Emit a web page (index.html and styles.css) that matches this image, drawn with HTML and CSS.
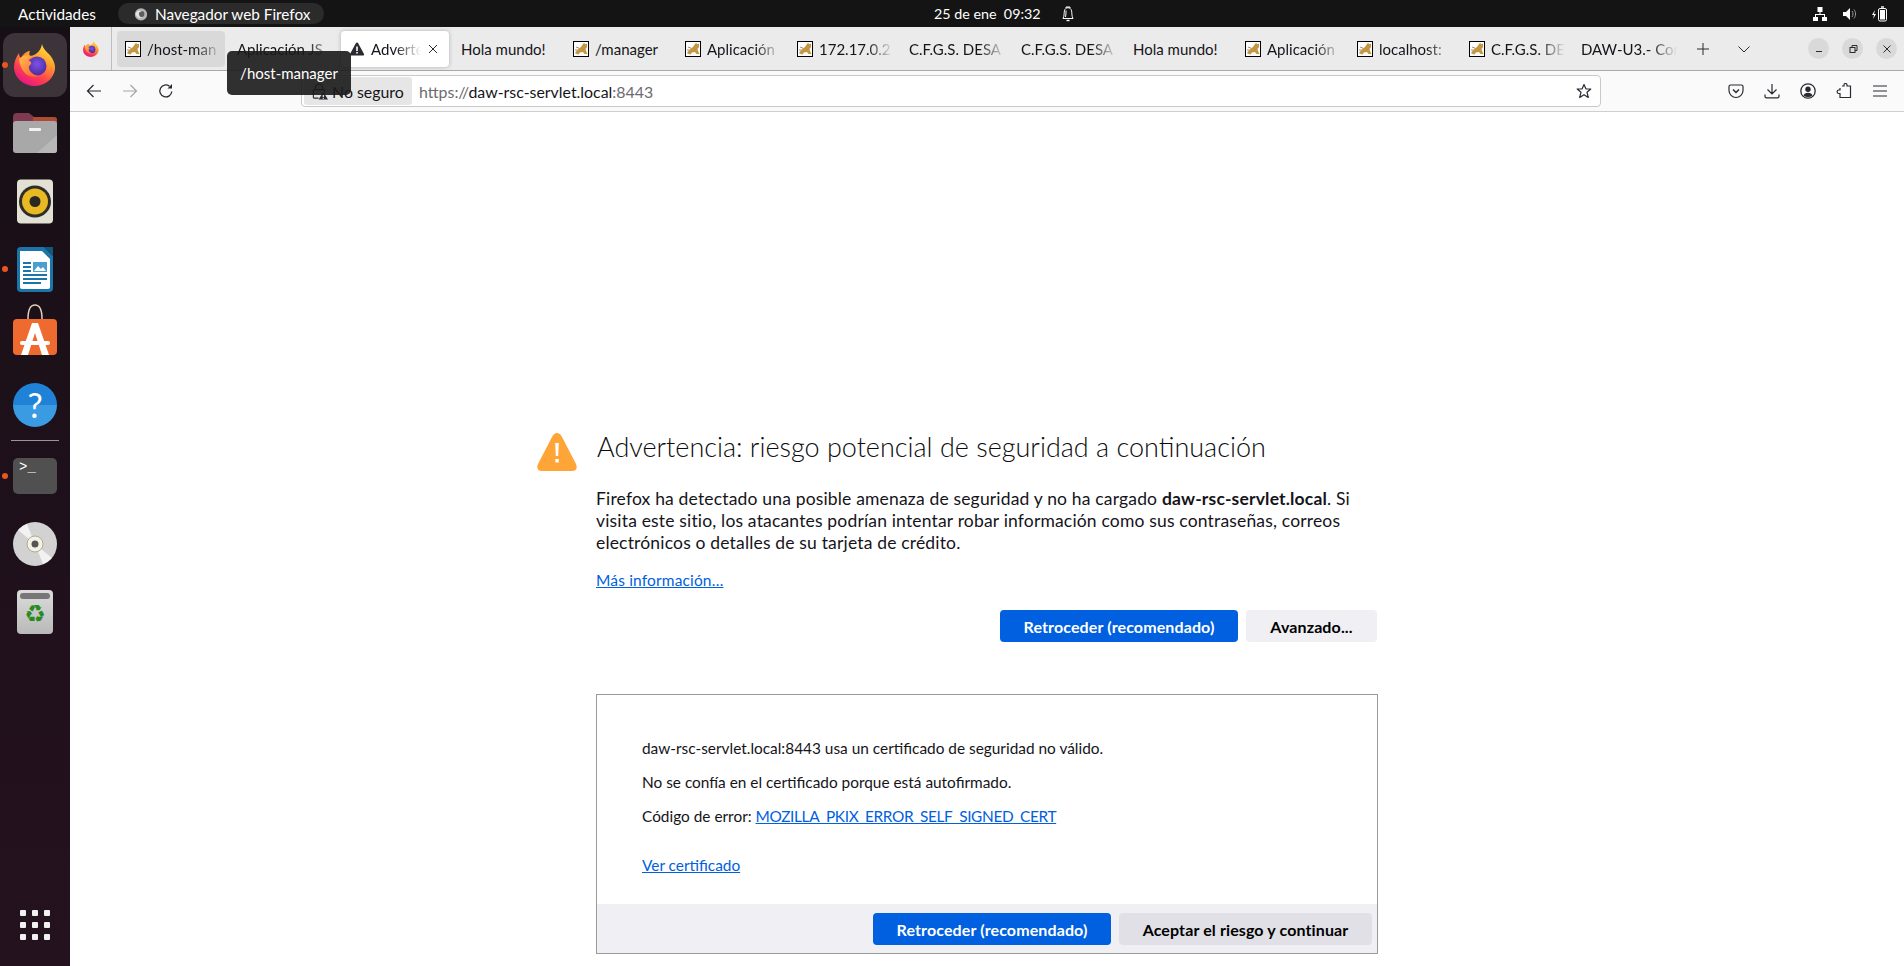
FILE: index.html
```html
<!DOCTYPE html>
<html lang="es">
<head>
    <meta charset="UTF-8">
    <title>Advertencia: riesgo potencial de seguridad a continuación</title>
    <link rel="stylesheet" href="styles.css">
</head>

<body>
    <!-- iconos que se repiten -->
    <svg class="defs" aria-hidden="true">
        <defs>
            <linearGradient id="fxOuter" x1="0.85" y1="0" x2="0.3" y2="1">
                <stop offset="0" stop-color="#ffe847"/>
                <stop offset="0.35" stop-color="#ffa52b"/>
                <stop offset="0.72" stop-color="#ff3d50"/>
                <stop offset="1" stop-color="#e31587"/>
            </linearGradient>
            <linearGradient id="fxHead" x1="0" y1="0" x2="1" y2="1">
                <stop offset="0" stop-color="#ffc04f"/>
                <stop offset="1" stop-color="#ff5a2c"/>
            </linearGradient>
            <radialGradient id="fxCore" cx="0.5" cy="0.4" r="0.6">
                <stop offset="0" stop-color="#7d52e8"/>
                <stop offset="1" stop-color="#4b2c9e"/>
            </radialGradient>
            <symbol id="firefox" viewBox="0 0 42 42">
                <path d="M28 0C29 6 35 9 38 14C41 19 42 24 40 29C37 37 29 42 21 42C10 42 0 34 0 23C0 18 2 13 5 9C5 12 6 13 7 14C9 10 13 7 16 7C15 9 15 11 16 12C20 12 27 8 28 0Z" fill="url(#fxOuter)"/>
                <circle cx="23" cy="22" r="9.5" fill="url(#fxCore)"/>
                <path d="M5 15C9 11 14 10 20 13C16 13 14 15 14 17C17 17 19 19 15 22C14 27 19 31 25 32C16 35 7 30 5 15Z" fill="url(#fxHead)"/>
            </symbol>
            <symbol id="tomcat" viewBox="0 0 16 16">
                <rect x="0.5" y="0.5" width="15" height="15" fill="#fff" stroke="#000"/>
                <path d="M2 12L5 8L8 6L10 3L11 2L12.5 3.2L14 2.5L14 6L12.5 8L13 10L14.5 13L11.5 13L10 11L7 11.5L5.5 13.5L3.5 13Z" fill="#c4963f"/>
                <path d="M3 6L6 7M2 9L4 9" stroke="#8a7a5a" stroke-width="0.8" fill="none"/>
            </symbol>
        </defs>
    </svg>

    <header class="topbar">
        <span class="activities">Actividades</span>
        <div class="app-pill">
            <svg class="app-pill-icon" viewBox="0 0 16 16">
                <circle cx="8" cy="8.5" r="7" fill="#b5b5b5"/>
                <circle cx="8.5" cy="8" r="3.4" fill="#5c5c5c"/>
                <path d="M2 7C4 4 7 4 9 5C6 5 5 7 6 9C6 11 8 12 10 12C6 14 2 11 2 7Z" fill="#e3e3e3"/>
            </svg>
            <span>Navegador web Firefox</span>
        </div>
        <div class="clock">
            <span>25 de ene&nbsp; 09:32</span>
            <svg class="bell" viewBox="0 0 14 16" fill="none" stroke="#fff">
                <path d="M2 12.5C3.4 10 3 7 3.4 4.8C3.8 2.8 5.4 1.7 7 1.7C8.6 1.7 10.2 2.8 10.6 4.8C11 7 10.6 10 12 12.5Z"/>
                <path d="M5 2V1H9V2M5 4.5C5 7 5 9 4.5 11"/>
                <path d="M5.5 14.5H8.5" stroke-width="1.4"/>
            </svg>
        </div>
        <div class="status">
            <svg viewBox="0 0 16 16" fill="#fff">
                <rect x="5.5" y="1" width="5" height="5"/>
                <rect x="1" y="11" width="5" height="4"/>
                <rect x="10" y="11" width="5" height="4"/>
                <path d="M7.5 6H8.5V8H13V11H12V9H4V11H3V8H7.5Z"/>
            </svg>
            <svg viewBox="0 0 16 16" fill="#fff">
                <path d="M2 6H5L9 2V14L5 10H2Z"/>
                <path d="M11 5C12.3 6.5 12.3 9.5 11 11M13 3.5C15 6 15 10 13 12.5" fill="none" stroke="#999"/>
            </svg>
            <svg viewBox="0 0 18 16" fill="none" stroke="#fff" class="status-bat">
                <rect x="8.5" y="2.5" width="8" height="12.5" rx="1.5"/>
                <rect x="10" y="4" width="5" height="9.5" fill="#fff" stroke="none"/>
                <path d="M11 1H14" stroke-width="1.4"/>
                <path d="M5 4L2 9H4L3 13L6 8H4Z" fill="#fff" stroke="none"/>
            </svg>
        </div>
    </header>

    <div class="desktop">
        <nav class="dock">
            <div class="dock-item dock-item-active running">
                <svg class="dock-firefox"><use href="#firefox"/></svg>
            </div>
            <div class="dock-item">
                <svg class="dock-icon-wide" viewBox="0 0 44 40">
                    <path d="M0 4Q0 0 4 0H16L21 4H41Q44 4 44 7V20H0Z" fill="#7e3a4e"/>
                    <path d="M20 4H41Q44 4 44 7V14H20Z" fill="#b9502f" opacity="0.8"/>
                    <rect y="8" width="44" height="32" rx="3" fill="#a8a8a8"/>
                    <path d="M44 22V37Q44 40 41 40H24Z" fill="#b8b8b8"/>
                    <rect x="16" y="15" width="12" height="3" rx="1" fill="#f2f2f2"/>
                </svg>
            </div>
            <div class="dock-item">
                <svg class="dock-icon-narrow" viewBox="0 0 36 44">
                    <rect width="36" height="44" rx="4" fill="#e3e0d4"/>
                    <circle cx="18" cy="22" r="16" fill="#2f2d2a"/>
                    <circle cx="18" cy="22" r="13" fill="#e8b923"/>
                    <circle cx="18" cy="22" r="5.5" fill="#2a2823"/>
                </svg>
            </div>
            <div class="dock-item running">
                <svg class="dock-icon-narrow" viewBox="0 0 36 45">
                    <path d="M4 0H27L36 9V41Q36 45 32 45H4Q0 45 0 41V4Q0 0 4 0Z" fill="#1b75a8"/>
                    <path d="M27 0H36V9Z" fill="#12577e"/>
                    <path d="M3 4H25L33 12V40Q33 42 31 42H5Q3 42 3 40Z" fill="#fff"/>
                    <rect x="16" y="15" width="14" height="10" fill="#4a9fd1"/>
                    <path d="M17 24L21 19L24 22L26 20L29 24Z" fill="#fff"/>
                    <path d="M6 16H14M6 20H14M6 24H14M6 28H30M6 32H30M6 36H24" stroke="#1b75a8" stroke-width="2"/>
                </svg>
            </div>
            <div class="dock-item">
                <svg class="dock-icon-bag" viewBox="0 0 44 51">
                    <path d="M15 15Q15 1 22 1Q29 1 29 15" fill="none" stroke="#e2cdb8" stroke-width="1.5"/>
                    <rect y="15" width="44" height="36" rx="4" fill="#ee6a2f"/>
                    <path d="M19 19H25L36 51H29L22 29L15 51H8Z" fill="#fff"/>
                    <rect x="7" y="37" width="30" height="4" rx="2" fill="#fff"/>
                </svg>
            </div>
            <div class="dock-item">
                <div class="help-icon">?</div>
            </div>
            <div class="dock-sep"></div>
            <div class="dock-item running">
                <div class="term-icon">&gt;_</div>
            </div>
            <div class="dock-item">
                <svg class="dock-icon-wide" viewBox="0 0 44 44">
                    <circle cx="22" cy="22" r="22" fill="#d2d2d2"/>
                    <path d="M22 22L5 8A22 22 0 0 1 14 2ZM22 22L39 36A22 22 0 0 1 30 42Z" fill="#f2f2f2"/>
                    <circle cx="22" cy="22" r="8" fill="#f4f1e6" stroke="#b3a98e"/>
                    <circle cx="22" cy="22" r="3.5" fill="#555"/>
                </svg>
            </div>
            <div class="dock-item">
                <div class="trash-icon">
                    <div class="trash-lid"></div>
                    <div class="trash-mark">♻</div>
                </div>
            </div>
            <div class="apps-grid">
                <i></i><i></i><i></i><i></i><i></i><i></i><i></i><i></i><i></i>
            </div>
        </nav>

        <div class="browser">
            <div class="tabstrip">
                <div class="fx-view"><svg class="fav"><use href="#firefox"/></svg></div>
                <div class="tabs">
                    <div class="tab tab-hover"><svg class="fav"><use href="#tomcat"/></svg><span class="tab-label tab-fade">/host-man</span></div>
                    <div class="tab"><span class="tab-label tab-fade">Aplicación JS</span></div>
                    <div class="tab tab-active">
                        <svg class="fav" viewBox="0 0 16 16"><path d="M8 1.5Q8.8 1.5 9.3 2.4L15 13Q15.6 14.5 14 14.5H2Q0.4 14.5 1 13L6.7 2.4Q7.2 1.5 8 1.5Z" fill="#2b2a33"/><path d="M7.2 5.5H8.8V10H7.2ZM7.2 11H8.8V12.6H7.2Z" fill="#fff"/></svg>
                        <span class="tab-label tab-fade">Adverte</span>
                        <svg class="tab-close" viewBox="0 0 12 12" fill="none" stroke="#2b2a33"><path d="M2 2L10 10M10 2L2 10"/></svg>
                    </div>
                    <div class="tab"><span class="tab-label">Hola mundo!</span></div>
                    <div class="tab"><svg class="fav"><use href="#tomcat"/></svg><span class="tab-label">/manager</span></div>
                    <div class="tab"><svg class="fav"><use href="#tomcat"/></svg><span class="tab-label tab-fade">Aplicación</span></div>
                    <div class="tab"><svg class="fav"><use href="#tomcat"/></svg><span class="tab-label tab-fade">172.17.0.2</span></div>
                    <div class="tab"><span class="tab-label tab-fade">C.F.G.S. DESA</span></div>
                    <div class="tab"><span class="tab-label tab-fade">C.F.G.S. DESA</span></div>
                    <div class="tab"><span class="tab-label">Hola mundo!</span></div>
                    <div class="tab"><svg class="fav"><use href="#tomcat"/></svg><span class="tab-label tab-fade">Aplicación</span></div>
                    <div class="tab"><svg class="fav"><use href="#tomcat"/></svg><span class="tab-label tab-fade">localhost:</span></div>
                    <div class="tab"><svg class="fav"><use href="#tomcat"/></svg><span class="tab-label tab-fade">C.F.G.S. DE</span></div>
                    <div class="tab"><span class="tab-label tab-fade">DAW-U3.- Con</span></div>
                </div>
                <div class="newtab"><svg viewBox="0 0 16 16" fill="none" stroke="#2b2a33"><path d="M8 2V14M2 8H14"/></svg></div>
                <div class="tablist"><svg viewBox="0 0 16 16" fill="none" stroke="#2b2a33"><path d="M2.5 5.5L8 11L13.5 5.5"/></svg></div>
                <div class="winctrls">
                    <div class="winbtn"><svg viewBox="0 0 12 12" fill="none" stroke="#2b2a33"><path d="M3 8.5H9"/></svg></div>
                    <div class="winbtn"><svg viewBox="0 0 12 12" fill="none" stroke="#2b2a33"><rect x="3" y="4.5" width="5" height="5"/><path d="M5 4.5V2.5H10V7.5H8"/></svg></div>
                    <div class="winbtn"><svg viewBox="0 0 12 12" fill="none" stroke="#2b2a33"><path d="M2.5 2.5L9.5 9.5M9.5 2.5L2.5 9.5"/></svg></div>
                </div>
            </div>

            <div class="navbar">
                <div class="nav-group">
                    <button class="navbtn"><svg viewBox="0 0 16 16" fill="none" stroke="#2b2a33" stroke-width="1.2"><path d="M15 8H1.5M7.5 2L1.5 8L7.5 14"/></svg></button>
                    <button class="navbtn navbtn-off"><svg viewBox="0 0 16 16" fill="none" stroke="#2b2a33" stroke-width="1.2"><path d="M1 8H14.5M8.5 2L14.5 8L8.5 14"/></svg></button>
                    <button class="navbtn"><svg viewBox="0 0 16 16" fill="none" stroke="#2b2a33" stroke-width="1.3"><path d="M13.8 8.5A6 6 0 1 1 11.5 3.2"/><path d="M14 1V5.5H9.5" fill="#2b2a33" stroke="none"/></svg></button>
                </div>
                <div class="urlbar">
                    <div class="identity">
                        <svg class="lock" viewBox="0 0 18 18" fill="none" stroke="#2b2a33" stroke-width="1.2">
                            <path d="M4.5 7V5A4 4 0 0 1 12.5 5V7"/>
                            <path d="M8 16H3.5Q2.5 16 2.5 15V8Q2.5 7 3.5 7H13.5Q14.5 7 14.5 8V9.5"/>
                            <path d="M13 9.5L18 17.5H8Z" fill="#2b2a33" stroke="none"/>
                            <path d="M13 12V15M13 15.8V16.8" stroke="#fff"/>
                        </svg>
                        <span>No seguro</span>
                    </div>
                    <div class="url"><span class="url-dim">https://</span>daw-rsc-servlet.local<span class="url-dim">:8443</span></div>
                    <svg class="star" viewBox="0 0 16 16" fill="none" stroke="#2b2a33" stroke-width="1.2"><path d="M8 1.5L10 6H14.8L11 9.3L12.3 14.5L8 11.7L3.7 14.5L5 9.3L1.2 6H6Z" stroke-linejoin="round"/></svg>
                </div>
                <div class="nav-group">
                    <button class="navbtn"><svg viewBox="0 0 16 16" fill="none" stroke="#2b2a33" stroke-width="1.2"><path d="M2.5 2H13.5Q15 2 15 3.5V7.5A7 7 0 0 1 1 7.5V3.5Q1 2 2.5 2Z"/><path d="M5 6.5L8 9.5L11 6.5" stroke-width="1.5"/></svg></button>
                    <button class="navbtn"><svg viewBox="0 0 16 16" fill="none" stroke="#2b2a33" stroke-width="1.2"><path d="M8 1V10.5M3.5 6.5L8 11L12.5 6.5M1 11.5V13.5Q1 14.8 2.5 14.8H13.5Q15 14.8 15 13.5V11.5"/></svg></button>
                    <button class="navbtn"><svg viewBox="0 0 16 16"><circle cx="8" cy="8" r="7.2" fill="none" stroke="#2b2a33" stroke-width="1.3"/><circle cx="8" cy="6.3" r="2.7" fill="#2b2a33"/><path d="M3.5 12.5Q4.5 9.8 8 9.8Q11.5 9.8 12.5 12.5Q10.5 14 8 14Q5.5 14 3.5 12.5Z" fill="#2b2a33"/></svg></button>
                    <button class="navbtn"><svg viewBox="0 0 16 16" fill="none" stroke="#2b2a33" stroke-width="1.2"><path d="M6 3H8V2A1.5 1.5 0 0 1 11 2V3H14.5V14.5H4V10.5H2.5A1.8 1.8 0 0 1 2.5 7H4V5"/></svg></button>
                    <button class="navbtn"><svg viewBox="0 0 16 16" fill="none" stroke="#2b2a33" stroke-width="1.2"><path d="M1 3H15M1 8H15M1 13H15"/></svg></button>
                </div>
            </div>

            <main class="content">
                <div class="warning">
                    <div class="warning-title">
                        <svg class="warning-icon" viewBox="0 0 40 38">
                            <path d="M20 0Q23 0 25 4L39 31Q41.5 38 35 38H5Q-1.5 38 1 31L15 4Q17 0 20 0Z" fill="#ffa436"/>
                            <path d="M18.2 10H21.8L21.2 23H18.8ZM18.3 26H21.7V29.5H18.3Z" fill="#fff"/>
                        </svg>
                        <h1>Advertencia: riesgo potencial de seguridad a continuación</h1>
                    </div>
                    <p class="warning-text">Firefox ha detectado una posible amenaza de seguridad y no ha cargado <b>daw-rsc-servlet.local</b>. Si<br>visita este sitio, los atacantes podrían intentar robar información como sus contraseñas, correos<br>electrónicos o detalles de su tarjeta de crédito.</p>
                    <a href="#" class="more">Más información…</a>
                    <div class="actions">
                        <button class="btn btn-primary btn-back">Retroceder (recomendado)</button>
                        <button class="btn btn-adv">Avanzado...</button>
                    </div>

                    <div class="advanced">
                        <div class="advanced-body">
                            <p>daw-rsc-servlet.local:8443 usa un certificado de seguridad no válido.</p>
                            <p>No se confía en el certificado porque está autofirmado.</p>
                            <p>Código de error: <a href="#" class="error-code">MOZILLA_PKIX_ERROR_SELF_SIGNED_CERT</a></p>
                            <p class="view-cert"><a href="#">Ver certificado</a></p>
                        </div>
                        <div class="advanced-foot">
                            <button class="btn btn-primary btn-back">Retroceder (recomendado)</button>
                            <button class="btn btn-accept">Aceptar el riesgo y continuar</button>
                        </div>
                    </div>
                </div>
            </main>

            <div class="tooltip">/host-manager</div>
        </div>
    </div>
</body>

</html>
```

FILE: styles.css
```css
* {
    margin: 0;
    padding: 0;
    box-sizing: border-box;
}

html,
body {
    height: 966px;
    overflow: hidden;
}

body {
    display: flex;
    flex-direction: column;
    font-family: Lato, "Open Sans", sans-serif;
    color: #15141a;
    background: #fff;
}

.defs {
    width: 0;
    height: 0;
    display: block;
}

button {
    font: inherit;
    border: 0;
    background: none;
}

/* barra superior */
.topbar {
    height: 27px;
    background: #141414;
    color: #fff;
    display: flex;
    align-items: center;
    font-size: 15.3px;
}

.activities {
    margin-left: 18px;
    width: 78px;
    white-space: nowrap;
}

.app-pill {
    margin-left: 22px;
    width: 206px;
    height: 21px;
    border-radius: 11px;
    background: #2b2b2b;
    display: flex;
    align-items: center;
    gap: 7px;
    padding-left: 16px;
    white-space: nowrap;
}

.app-pill-icon {
    width: 14px;
    height: 14px;
}

.clock {
    margin-left: 610px;
    display: flex;
    align-items: center;
    gap: 20px;
    font-size: 14.3px;
    white-space: nowrap;
}

.bell {
    width: 14px;
    height: 16px;
}

.status {
    margin-left: auto;
    margin-right: 16px;
    display: flex;
    align-items: center;
    gap: 13px;
}

.status svg {
    width: 16px;
    height: 16px;
    display: block;
}

.status .status-bat {
    width: 18px;
}

/* dock */
.desktop {
    flex: 1;
    display: flex;
    position: relative;
    min-height: 0;
}

.dock {
    width: 70px;
    background: linear-gradient(180deg, #170f16, #25121f);
    display: flex;
    flex-direction: column;
    align-items: center;
    padding-top: 6px;
    flex-shrink: 0;
}

.dock-item {
    width: 64px;
    height: 64px;
    margin-bottom: 4px;
    border-radius: 12px;
    display: flex;
    align-items: center;
    justify-content: center;
    position: relative;
    flex-shrink: 0;
}

.dock-item-active {
    background: #3c3439;
}

.running::before {
    content: "";
    position: absolute;
    left: -1px;
    top: 29px;
    width: 6px;
    height: 6px;
    border-radius: 50%;
    background: #e95420;
}

.dock-firefox {
    width: 42px;
    height: 42px;
}

.dock-icon-wide {
    width: 44px;
    height: 44px;
}

.dock-icon-narrow {
    width: 36px;
    height: 45px;
}

.dock-icon-bag {
    width: 44px;
    height: 51px;
    align-self: flex-start;
    margin-top: -1px;
}

.dock-sep {
    width: 48px;
    height: 1px;
    margin: -1px 0 3px;
    background: #9b949a;
}

.help-icon {
    width: 44px;
    height: 44px;
    border-radius: 50%;
    background: linear-gradient(180deg, #1f82d6 50%, #3a9be3 50%);
    color: #fff;
    font-size: 34px;
    line-height: 44px;
    text-align: center;
}

.term-icon {
    width: 44px;
    height: 36px;
    border-radius: 5px;
    background: #505050;
    color: #fff;
    font-family: "Liberation Mono", monospace;
    font-size: 14px;
    line-height: 18px;
    padding-left: 6px;
}

.trash-icon {
    width: 36px;
    height: 44px;
    border-radius: 4px;
    background: linear-gradient(180deg, #dcdcdc, #b9b9b9);
    padding: 3px;
    text-align: center;
}

.trash-lid {
    height: 6px;
    border-radius: 3px;
    background: #777;
}

.trash-mark {
    font-family: "DejaVu Sans", sans-serif;
    font-size: 24px;
    line-height: 30px;
    color: #2a8a22;
}

.apps-grid {
    margin-top: auto;
    margin-bottom: 26px;
    display: grid;
    grid-template-columns: repeat(3, 6px);
    gap: 6px;
}

.apps-grid i {
    width: 6px;
    height: 6px;
    border-radius: 1px;
    background: #f3f0f2;
}

/* navegador */
.browser {
    flex: 1;
    min-width: 0;
    display: flex;
    flex-direction: column;
    position: relative;
}

.tabstrip {
    height: 44px;
    background: #ebebeb;
    border-bottom: 1px solid #a9a9a9;
    display: flex;
    align-items: center;
    flex-shrink: 0;
}

.fx-view {
    width: 42px;
    height: 43px;
    border-right: 1px solid #bdbdbd;
    display: flex;
    align-items: center;
    padding-left: 13px;
}

.fav {
    width: 16px;
    height: 16px;
    flex-shrink: 0;
}

.tabs {
    display: flex;
    gap: 4px;
    margin-left: 5px;
}

.tab {
    width: 108px;
    height: 36px;
    padding: 0 4px 0 8px;
    border-radius: 4px;
    display: flex;
    align-items: center;
    gap: 6px;
    font-size: 15px;
}

.tab-hover {
    background: #d9d9d9;
}

.tab-active {
    padding-right: 10px;
    background: #fff;
    box-shadow: 0 0 4px rgba(0, 0, 0, 0.25);
}

.tab-label {
    flex: 1;
    min-width: 0;
    overflow: hidden;
    white-space: nowrap;
}

/* el texto largo se desvanece al final */
.tab-fade {
    -webkit-mask-image: linear-gradient(90deg, #000 calc(100% - 26px), transparent);
    mask-image: linear-gradient(90deg, #000 calc(100% - 26px), transparent);
}

.tab-close {
    width: 12px;
    height: 12px;
    flex-shrink: 0;
}

.newtab {
    width: 44px;
    display: flex;
    justify-content: center;
}

.tablist {
    width: 38px;
    display: flex;
    justify-content: center;
}

.newtab svg,
.tablist svg {
    width: 16px;
    height: 16px;
}

.winctrls {
    margin-left: auto;
    margin-right: 7px;
    display: flex;
    gap: 13px;
}

.winbtn {
    width: 21px;
    height: 21px;
    border-radius: 50%;
    background: #d9d9d9;
    display: flex;
    align-items: center;
    justify-content: center;
}

.winbtn svg {
    width: 12px;
    height: 12px;
}

.navbar {
    height: 41px;
    background: #fafafa;
    border-bottom: 1px solid #cfcfcf;
    padding: 0 6px;
    display: flex;
    align-items: center;
    flex-shrink: 0;
}

.nav-group {
    display: flex;
}

.navbtn {
    width: 36px;
    height: 32px;
    display: flex;
    align-items: center;
    justify-content: center;
}

.navbtn svg {
    width: 16px;
    height: 16px;
}

.navbtn-off {
    opacity: 0.4;
}

.urlbar {
    flex: 1;
    height: 32px;
    margin: 0 117px;
    padding: 0 8px 0 2px;
    background: #fff;
    border: 1px solid #c9c9c9;
    border-radius: 4px;
    display: flex;
    align-items: center;
    font-size: 15.9px;
}

.identity {
    height: 28px;
    width: 108px;
    background: #e6e6e6;
    border-radius: 3px;
    display: flex;
    align-items: center;
    gap: 4px;
    padding-left: 7px;
    white-space: nowrap;
}

.lock {
    width: 17px;
    height: 17px;
}

.url {
    flex: 1;
    margin-left: 7px;
    white-space: nowrap;
}

.url-dim {
    color: #6b6b70;
}

.star {
    width: 16px;
    height: 16px;
}

.tooltip {
    position: absolute;
    left: 157px;
    top: 24px;
    width: 124px;
    height: 44px;
    border-radius: 5px;
    background: rgba(25, 25, 25, 0.9);
    color: #fff;
    font-size: 15px;
    line-height: 44px;
    text-align: center;
}

/* pagina de advertencia */
.content {
    flex: 1;
    background: #fff;
    min-height: 0;
}

.warning {
    width: 782px;
    margin: 0 auto;
    padding-top: 316px;
}

.warning-title {
    height: 38px;
    display: flex;
    align-items: flex-start;
    gap: 20px;
    margin-left: -59px;
}

.warning-icon {
    width: 40px;
    height: 38px;
    margin-top: 5px;
    flex-shrink: 0;
}

h1 {
    font-size: 27px;
    font-weight: 300;
    line-height: 38px;
    color: #0c0c0d;
    white-space: nowrap;
}

.warning-text {
    margin-top: 22px;
    font-size: 17.5px;
    letter-spacing: 0.17px;
    line-height: 22px;
    white-space: nowrap;
}

.warning a {
    color: #0060df;
}

.more {
    display: block;
    margin-top: 15px;
    font-size: 15.5px;
    letter-spacing: 0.15px;
    line-height: 22px;
}

.actions {
    margin-top: 19px;
    padding-right: 1px;
    display: flex;
    justify-content: flex-end;
    gap: 8px;
}

.btn {
    height: 32px;
    border-radius: 4px;
    font-size: 16px;
    letter-spacing: 0.12px;
    font-weight: 700;
    white-space: nowrap;
}

.btn-primary {
    background: #0060df;
    color: #fff;
}

.btn-back {
    width: 238px;
}

.btn-adv {
    width: 131px;
    background: #f0f0f4;
}

.btn-accept {
    width: 253px;
    background: #e0e0e6;
}

.advanced {
    margin-top: 52px;
    border: 1px solid #9a9a9a;
}

.advanced-body {
    padding: 43px 45px 29px;
    font-size: 15.4px;
    line-height: 20px;
}

.advanced-body p {
    margin-bottom: 14px;
}

.advanced-body .view-cert {
    margin: 29px 0 0;
}

.error-code {
    letter-spacing: -0.35px;
}

.advanced-foot {
    background: #f0f0f4;
    padding: 9px 5px 8px 0;
    display: flex;
    justify-content: flex-end;
    gap: 8px;
}
```
